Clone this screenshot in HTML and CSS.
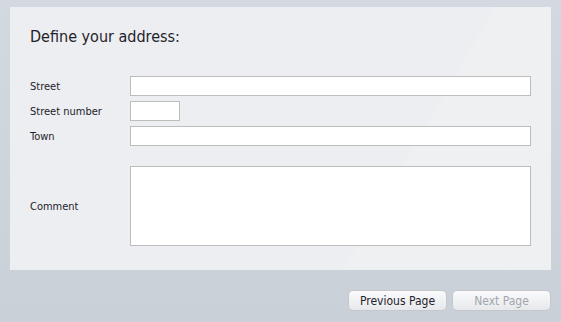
FILE: index.html
```html
<!DOCTYPE html>
<html lang="en">
<head>
  <meta charset="UTF-8">
  <title>Define your address</title>
  <link rel="stylesheet" href="styles.css">
</head>
<body>
  <!-- Address form -->
  <div class="panel">
    <h1>Define your address:</h1>
    <div class="form-grid">
      <label for="street">Street</label>
      <input type="text" id="street" class="field wide">

      <label for="streetNumber">Street number</label>
      <input type="text" id="streetNumber" class="field short">

      <label for="town">Town</label>
      <input type="text" id="town" class="field wide">

      <label for="comment" class="comment-label">Comment</label>
      <textarea id="comment" class="field comment"></textarea>
    </div>
  </div>

  <!-- Wizard navigation -->
  <div class="nav-buttons">
    <button class="nav-btn">Previous Page</button>
    <button class="nav-btn" disabled>Next Page</button>
  </div>
</body>
</html>
```

FILE: styles.css
```css
/* styles.css */

:root {
  --bg-top: #d3d9e0;
  --bg-bottom: #cad0d8;
  --panel-color: #eceef1;
  --text-color: #1f2229;
  --border-color: #bdbdbd;
}

body {
  margin: 0;
  padding: 7px 10px 0;
  height: 322px;
  box-sizing: border-box;
  font-family: "DejaVu Sans Condensed", "DejaVu Sans", sans-serif;
  color: var(--text-color);
  background: linear-gradient(to bottom, var(--bg-top), var(--bg-bottom));
  overflow: hidden;
}

.panel {
  background: linear-gradient(120deg, var(--panel-color) 70%, #eff0f2 70%);
  padding: 20px 20px 24px;
}

.panel h1 {
  margin: 0 0 29px;
  font-size: 16px;
  font-weight: normal;
  line-height: 20px;
}

.form-grid {
  display: grid;
  grid-template-columns: 100px 1fr;
  row-gap: 5px;
  align-items: center;
  font-size: 11px;
}

.field {
  box-sizing: border-box;
  height: 20px;
  margin: 0;
  border: 1px solid var(--border-color);
  background: #fff;
  font: inherit;
}

.field.short {
  width: 50px;
}

.comment-label,
.field.comment {
  margin-top: 15px;
}

.field.comment {
  height: 80px;
  resize: none;
}

.nav-buttons {
  display: flex;
  justify-content: flex-end;
  gap: 5px;
  margin-top: 20px;
}

.nav-btn {
  width: 99px;
  height: 21px;
  padding: 0;
  border: 1px solid #c4c7cc;
  border-radius: 5px;
  background: linear-gradient(to bottom, #fbfbfc, #e6e8eb);
  font-family: inherit;
  font-size: 12px;
  color: var(--text-color);
  cursor: pointer;
}

.nav-btn:disabled {
  color: #a2a6ad;
  cursor: default;
}
```
